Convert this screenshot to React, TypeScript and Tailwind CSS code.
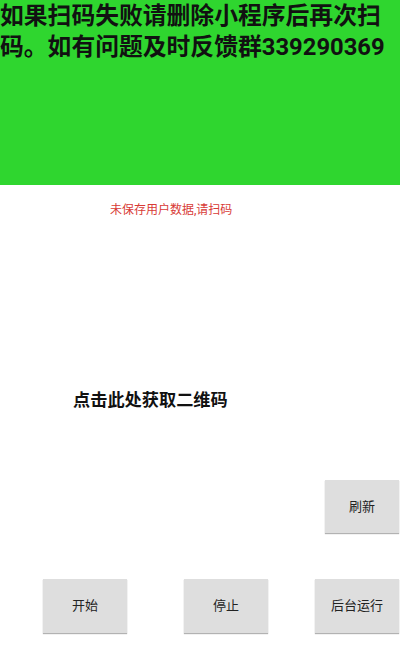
const cjk = { fontFamily: '"Roboto", "Noto Sans CJK SC", sans-serif' };

function GrayButton({ label, className }: { label: string; className: string }) {
  return (
    <button
      className={`flex items-center justify-center bg-[#dedede] text-[13px] text-[#222] shadow-[0_1px_1px_rgba(0,0,0,0.3)] ${className}`}
    >
      {label}
    </button>
  );
}

export default function App() {
  return (
    <div className="flex h-[660px] w-[400px] flex-col bg-white" style={cjk}>
      <div className="h-[185px] bg-[#2fd62f] pt-[1px] text-[23.8px] font-bold leading-[31px] text-[#111]">
        如果扫码失败请删除小程序后再次扫码。如有问题及时反馈群339290369
      </div>
      <p className="mt-[17px] pl-[110px] text-[12px] leading-[16px] text-[#d83a36]">
        未保存用户数据,请扫码
      </p>
      <p className="mt-[171px] pl-[73px] text-[17.2px] font-bold leading-[22px] text-[#111]">
        点击此处获取二维码
      </p>
      <div className="mt-[69px] flex justify-end pr-[1px]">
        <GrayButton label="刷新" className="h-[53px] w-[74px]" />
      </div>
      <div className="mt-[46px] flex">
        <GrayButton label="开始" className="ml-[43px] h-[54px] w-[84px]" />
        <GrayButton label="停止" className="ml-[57px] h-[54px] w-[84px]" />
        <GrayButton label="后台运行" className="ml-[47px] h-[54px] w-[84px]" />
      </div>
    </div>
  );
}
